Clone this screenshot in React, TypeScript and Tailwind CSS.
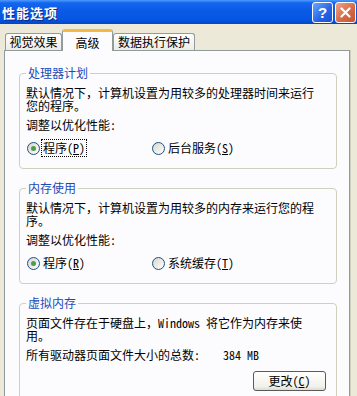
import type { ReactNode } from "react";

// XP "性能选项" dialog, 高级 tab

function Radio({ checked }: { checked?: boolean }) {
  return (
    <span className="ml-[1px] flex size-[13px] shrink-0 items-center justify-center rounded-full border border-[#1C5180] bg-[linear-gradient(135deg,#d6d6d0,#ffffff)]">
      {checked && <span className="size-[5px] rounded-full bg-[#4f9a4f]" />}
    </span>
  );
}

function Option({
  label,
  hotkey,
  checked,
  focused,
}: {
  label: string;
  hotkey: string;
  checked?: boolean;
  focused?: boolean;
}) {
  return (
    <label className="flex w-[125px] items-center">
      <Radio checked={checked} />
      <span
        className={
          focused
            ? "ml-[1px] border border-dotted border-black px-[1px] py-[2px] leading-[12px]"
            : "ml-[1px] border border-transparent px-[1px] py-[2px] leading-[12px]"
        }
      >
        {label}(<span className="underline">{hotkey}</span>)
      </span>
    </label>
  );
}

function Group({ title, children }: { title: string; children: ReactNode }) {
  return (
    <fieldset className="rounded-[4px] border border-[#D0D0BF] px-[6px] pb-[11px] pt-[6px]">
      <legend className="px-[2px] text-[12px] leading-[14px] text-[#1D4AB8]">{title}</legend>
      {children}
    </fieldset>
  );
}

function TitleButton({ kind }: { kind: "help" | "close" }) {
  if (kind === "help") {
    return (
      <div className="flex size-[21px] items-center justify-center rounded-[3px] border border-white bg-[linear-gradient(135deg,#6aa6ff,#2563e6_60%,#1c4fd0)] font-['Liberation_Sans',sans-serif] text-[15px] font-bold leading-none text-white">
        ?
      </div>
    );
  }
  return (
    <div className="flex size-[21px] items-center justify-center rounded-[3px] border border-white bg-[linear-gradient(135deg,#eea58a,#d86a47_55%,#c9532f)]">
      <svg width="11" height="11" viewBox="0 0 11 11">
        <path d="M1.5 1.5 L9.5 9.5 M9.5 1.5 L1.5 9.5" stroke="#ffffff" strokeWidth="2.2" strokeLinecap="round" />
      </svg>
    </div>
  );
}

export default function App() {
  return (
    <div className="flex h-[396px] w-[357px] flex-col overflow-hidden bg-[#ECE9D8] font-['Noto_Sans_Mono_CJK_SC','Noto_Sans_CJK_SC',sans-serif] text-[12px] leading-[12px] text-black">
      {/* title bar */}
      <div className="flex h-[24px] shrink-0 items-center justify-between bg-[linear-gradient(to_bottom,#4f9bff_0%,#1466ee_12%,#0a5ae6_45%,#0556e2_80%,#0345c8_100%)] pl-[2px] pr-[1px]">
        <span className="font-['Noto_Sans_CJK_SC',sans-serif] text-[13px] font-bold leading-none tracking-[1px] text-white [text-shadow:1px_1px_#0c2a8a]">
          性能选项
        </span>
        <div className="flex gap-[2px]">
          <TitleButton kind="help" />
          <TitleButton kind="close" />
        </div>
      </div>

      {/* tabs */}
      <div className="relative z-10 flex h-[26px] shrink-0 items-end pl-[5px]">
        <div className="flex h-[17px] w-[57px] items-center justify-center rounded-t-[3px] border border-b-0 border-[#919B9C] bg-[linear-gradient(to_bottom,#ffffff,#ecebe6)]">
          视觉效果
        </div>
        <div className="mb-[-1px] flex h-[22px] w-[51px] items-start justify-center rounded-t-[3px] border-x border-t-[3px] border-x-[#919B9C] border-t-[#F5B845] bg-[#FCFCFE] pt-[5px]">
          高级
        </div>
        <div className="flex h-[17px] w-[82px] items-center justify-center rounded-t-[3px] border border-b-0 border-[#919B9C] bg-[linear-gradient(to_bottom,#ffffff,#ecebe6)]">
          数据执行保护
        </div>
      </div>

      {/* panel */}
      <div className="ml-[4px] flex w-[346px] flex-1 flex-col gap-[12px] border border-b-0 border-[#919B9C] bg-[#FCFCFE] pl-[14px] pr-[12px] pt-[15px] shadow-[1px_0_0_#D0CEBF]">
        <Group title="处理器计划">
          <p className="whitespace-nowrap leading-[13px]">
            默认情况下，计算机设置为用较多的处理器时间来运行
            <br />
            您的程序。
          </p>
          <p className="mt-[7px]">调整以优化性能:</p>
          <div className="mt-[8px] flex">
            <Option label="程序" hotkey="P" checked focused />
            <Option label="后台服务" hotkey="S" />
          </div>
        </Group>

        <Group title="内存使用">
          <p className="whitespace-nowrap leading-[13px]">
            默认情况下，计算机设置为用较多的内存来运行您的程
            <br />
            序。
          </p>
          <p className="mt-[7px]">调整以优化性能:</p>
          <div className="mt-[8px] flex">
            <Option label="程序" hotkey="R" checked />
            <Option label="系统缓存" hotkey="T" />
          </div>
        </Group>

        <Group title="虚拟内存">
          <p className="whitespace-nowrap leading-[13px]">
            页面文件存在于硬盘上，Windows 将它作为内存来使
            <br />
            用。
          </p>
          <div className="mt-[7px] flex">
            <span className="w-[197px]">所有驱动器页面文件大小的总数:</span>
            <span>384 MB</span>
          </div>
          <div className="mt-[10px] flex justify-end pr-[4px]">
            <button
              type="button"
              className="flex h-[20px] w-[73px] items-center justify-center rounded-[3px] border border-[#5a5a5a] bg-[linear-gradient(to_bottom,#ffffff,#f2f1ea_80%,#dedcd0)]"
            >
              更改(<span className="underline">C</span>)
            </button>
          </div>
          <div className="h-[20px]" />
        </Group>
      </div>
    </div>
  );
}
